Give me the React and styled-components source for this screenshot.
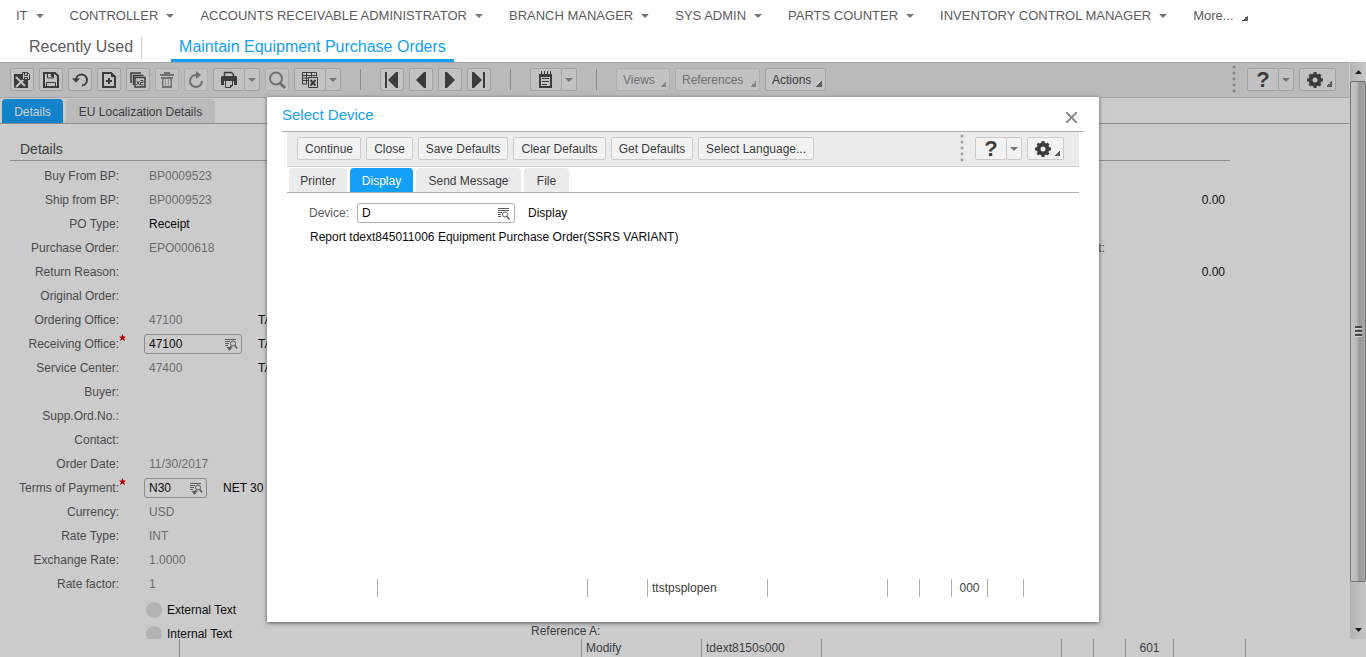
import React from "react";
import styled, { createGlobalStyle, css } from "styled-components";

const Global = createGlobalStyle`
  * { box-sizing: border-box; }
  body { margin: 0; font: 12px/16px "Liberation Sans", Arial, sans-serif; color: #3c3c3c; background: #fff; }
  button, input { font: inherit; color: inherit; margin: 0; padding: 0; }
  svg { display: block; flex: none; }
`;

const Page = styled.div`
  display: flex;
  flex-direction: column;
  height: 100vh;
  overflow: hidden;
`;

/* Role menu */
const Roles = styled.nav`
  display: flex;
  align-items: center;
  flex: none;
  height: 31px;
  margin-bottom: 1px;
  padding: 0 16px;
  gap: 26px;
`;
const Role = styled.button`
  display: flex;
  align-items: center;
  gap: 8px;
  border: 0;
  background: none;
  font-size: 13px;
  line-height: 16px;
  color: #5c5c5c;
  white-space: nowrap;
`;
const Sessions = styled.nav`
  display: flex;
  flex: none;
  height: 30px;
  padding: 0 21px;
`;
const Session = styled.a`
  display: flex;
  align-items: center;
  height: 30px;
  padding: 0 8px;
  font-size: 16px;
  text-decoration: none;
  white-space: nowrap;
  color: ${(p) => (p.$active ? "#14a0f8" : "#5c5c5c")};
  ${(p) => p.$active && css`box-shadow: inset 0 -3px #14a0f8;`}
`;
const SessionRule = styled.span`
  width: 1px;
  height: 22px;
  margin: 5px 29px 0 0;
  background: #ccc;
`;

/* Workspace */
const Workspace = styled.div`
  position: relative;
  display: flex;
  flex-direction: column;
  flex: 1;
  min-height: 0;
  background: #cbcbcb;
`;
const Upper = styled.div`
  display: flex;
  flex: 1;
  min-height: 0;
`;
const Pane = styled.main`
  display: flex;
  flex-direction: column;
  flex: 1;
  min-width: 0;
  overflow: hidden;
`;
const Bar = styled.div`
  display: flex;
  align-items: center;
  flex: none;
  gap: 5px;
  height: ${(p) => (p.$light ? 35 : 36)}px;
  padding: ${(p) => (p.$light ? "0 15px 1px 10px" : "0 13px 1px 10px")};
  background: ${(p) => (p.$light ? "#ebebeb" : "#bababa")};
  border: solid ${(p) => (p.$light ? "#d2d2d2" : "#a4a4a4")};
  border-width: ${(p) => (p.$light ? "0 0 1px" : "1px 0")};
`;
const Spring = styled.span`flex: 1;`;
const Rule = styled.span`
  width: 1px;
  height: 21px;
  margin: 0 14px;
  background: #8c8c8c;
`;
const Dots = styled.span`
  width: 4px;
  height: 29px;
  margin-right: 6px;
  background: radial-gradient(circle at 2px 2px, ${(p) => (p.$light ? "#a6a6a6" : "#868686")} 1px, transparent 2px) 0 0 / 4px 6px;
`;
const Tool = styled.button`
  display: flex;
  align-items: center;
  justify-content: center;
  flex: none;
  height: 23px;
  min-width: ${(p) => p.$w || 24}px;
  padding: 0;
  white-space: nowrap;
  border: 1px solid ${(p) => (p.$light ? "#cacaca" : p.disabled ? "#aeaeae" : "#a2a2a2")};
  border-radius: 2px;
  background: ${(p) => (p.$light ? "#f2f2f2" : "#c2c2c2")};
  color: ${(p) => (p.disabled ? "#717171" : "#3c3c3c")};
`;
const Split = styled.span`
  display: flex;
  ${Tool} + ${Tool} { margin-left: -1px; color: #5c5c5c; }
`;
const MenuTool = styled(Tool)`
  justify-content: space-between;
  padding: 0 3px 0 6px;
`;
const Corner = styled.span`
  align-self: flex-end;
  width: 6px;
  height: 6px;
  margin-bottom: 3px;
  background: linear-gradient(135deg, transparent 50%, #5c5c5c 50%);
  ${(p) => p.$faint && css`opacity: 0.6;`}
`;
const Mark = styled.span`
  font-size: 22px;
  font-weight: bold;
`;
const TabStrip = styled.div`
  display: flex;
  align-items: flex-end;
  flex: none;
  gap: 3px;
  height: 26px;
  padding-left: 2px;
  border-bottom: 1px solid ${(p) => (p.$light ? "#acacac" : "#8c8c8c")};
`;
const Tab = styled.button`
  height: 24px;
  min-width: ${(p) => p.$w}px;
  padding-top: 1px;
  border: 0;
  border-radius: 4px 4px 0 0;
  background: ${(p) => (p.$light ? "#ebebeb" : "#bababa")};
  white-space: nowrap;
  ${(p) => p.$active && css`
    background: ${p.$light ? "#14a0f8" : "#1283ca"};
    color: ${p.$light ? "#fff" : "#d2d2d2"};
  `}
`;
const Heading = styled.h2`
  flex: none;
  height: 37px;
  margin: 0 119px 3px 10px;
  padding: 17px 10px 0;
  font-size: 14px;
  line-height: 16px;
  font-weight: normal;
  border-bottom: 1px solid #8c8c8c;
`;
const Columns = styled.div`
  display: flex;
  flex: 1;
  min-height: 0;
  padding: 0 124px 0 10px;
`;
const Column = styled.div`
  flex: ${(p) => p.$grow || "none"};
  ${(p) => p.$bottom && css`align-self: flex-end;`}
`;
const Row = styled.div`
  display: flex;
  align-items: center;
  height: 24px;
  white-space: nowrap;
`;
const Label = styled.label`
  width: 109px;
  text-align: right;
  color: #4a4a4a;
`;
const Gutter = styled.span`
  width: 25px;
  height: 20px;
`;
const Value = styled.output`
  width: 98px;
  padding-left: 5px;
  color: ${(p) => (p.$strong ? "#0c0c0c" : "#6b6b6b")};
`;
const Note = styled.span`
  padding-left: ${(p) => p.$gap || 16}px;
  color: #0c0c0c;
`;
const Field = styled.span`
  display: flex;
  align-items: center;
  width: ${(p) => p.$w}px;
  height: 20px;
  padding: 0 3px 0 4px;
  border: 1px solid ${(p) => (p.$light ? "#acacac" : "#8c8c8c")};
  border-radius: 3px;
  input { flex: 1; min-width: 0; width: 0; border: 0; outline: 0; background: none; color: #0c0c0c; }
  button { border: 0; background: none; color: #5c5c5c; }
`;
const Texts = styled.div`
  margin: 2px 0 0 136px;
`;
const Option = styled.label`
  display: flex;
  align-items: center;
  gap: 5px;
  height: 24px;
  color: #0c0c0c;
  input { appearance: none; width: 16px; height: 16px; border-radius: 50%; background: #b3b3b3; }
`;
const Amounts = styled.div`
  display: grid;
  grid-auto-rows: 24px;
  grid-template-columns: 1fr 120px;
  align-items: center;
  text-align: right;
`;
const Amount = styled.output`color: #0c0c0c;`;

/* Scroll bar */
const Scroll = styled.div`
  display: flex;
  flex-direction: column;
  align-items: center;
  flex: none;
  width: 16px;
  margin-left: 1px;
  background: linear-gradient(90deg, #b3b3b3, #c6c6c6);
`;
const ScrollEnd = styled.button`
  display: flex;
  align-items: center;
  justify-content: center;
  width: 16px;
  height: 19px;
  border: 0;
  background: none;
  color: #1c1c1c;
`;
const Thumb = styled.div`
  display: flex;
  flex-direction: column;
  align-items: center;
  justify-content: center;
  gap: 1px;
  flex: 500;
  width: 16px;
  border: 1px solid #737373;
  border-radius: 2px;
  background: linear-gradient(90deg, #c6c6c6, #b9b9b9 40%, #98989b 60%, #a6a6a8);
`;
const Grip = styled.i`
  width: 7px;
  height: 3px;
  background: #484848;
  border-bottom: 1px solid #d2d2d2;
`;
const Track = styled.div`flex: 38;`;

/* Status line */
const Status = styled.footer`
  display: flex;
  flex: none;
  height: 18px;
`;
const Cell = styled.span`
  flex: ${(p) => (p.$w ? `none` : 1)};
  width: ${(p) => p.$w || 0}px;
  padding-left: ${(p) => (p.$center ? 0 : 4)}px;
  text-align: ${(p) => (p.$center ? "center" : "left")};
  line-height: 18px;
  border-right: 1px solid ${(p) => (p.$light ? "#acacac" : "#8c8c8c")};
  &:last-child { border: 0; }
`;

/* Dialog */
const Overlay = styled.div`
  position: absolute;
  inset: 0;
  display: flex;
  justify-content: center;
  padding: 35px 0;
`;
const Dialog = styled.section`
  display: flex;
  flex-direction: column;
  width: 832px;
  max-width: 100%;
  padding: 0 15px 25px;
  background: #fff;
  box-shadow: 0 1px 4px #555;
`;
const DialogHead = styled.header`
  display: flex;
  justify-content: space-between;
  flex: none;
  height: 35px;
  padding: 10px 7px 0 0;
  border-bottom: 1px solid #acacac;
  h1 { margin: 0; font-size: 15px; line-height: 16px; font-weight: normal; color: #14a0f8; }
  button { height: 20px; border: 0; background: none; }
`;
const DialogBody = styled.div`
  display: flex;
  flex-direction: column;
  flex: 1;
  margin: 0 5px;
`;
const Device = styled.div`
  flex: 1;
  padding: 8px 0 0 22px;
  color: #0c0c0c;
  ${Label} { width: 48px; text-align: left; color: #5c5c5c; }
`;
const Report = styled.p`
  margin: 4px 1px;
`;

const Caret = () => (
  <svg width="8" height="4" viewBox="0 0 8 4" fill="#757575"><path d="M0 0h8L4 4z" /></svg>
);
const Icon = ({ w = 18, children }) => (
  <svg width={w} height="19" viewBox={`0 0 ${w} 19`} fill="none" stroke="currentColor" strokeWidth="2">{children}</svg>
);
const icons = {
  saveClose: (
    <Icon>
      <path d="M1 4h8v6h6v8H2l-1-1z" fill="currentColor" stroke="none" />
      <path d="M3 7l9 9M11 9l-8 8" stroke="#c2c2c2" />
      <path d="M9.500 2.500h5l2 2v5h-7z" fill="#c2c2c2" strokeWidth="1" />
      <path d="M11.500 3v2.500h3V3M11.500 9.500V7.500h3v2" strokeWidth="1" />
    </Icon>
  ),
  save: (
    <Icon>
      <path d="M2 3h11l3 3v11H2z" />
      <path d="M5.500 3v5h6V3M4.500 17v-4.500h9V17" strokeWidth="1" />
      <path d="M9 4h2v3H9z" fill="currentColor" stroke="none" />
    </Icon>
  ),
  undo: (
    <Icon>
      <path d="M5 9.500a5.500 5.500 0 1 1 6 6" />
      <path d="M1 8.500h8l-4 4z" fill="currentColor" stroke="none" />
    </Icon>
  ),
  add: (
    <Icon>
      <path d="M3 3h8l4 4v10H3z" />
      <path d="M11 2v5h5z" fill="currentColor" stroke="none" />
      <path d="M9 8v6M6 11h6" />
    </Icon>
  ),
  copy: (
    <Icon>
      <path d="M2 13V3h10M4.500 15V5.500h10" strokeWidth="1.500" />
      <path d="M6 7.500h10V17H6z" strokeWidth="1.500" />
      <path d="M7.500 11l3 4M10.500 11l-3 4M11.500 10.500h2.500v2h-2.500v2.500h3" strokeWidth="1" />
    </Icon>
  ),
  trash: (
    <Icon>
      <path d="M2 5h14M6 3h6" />
      <path d="M3 7h12v2h-1v9H4V9H3z" fill="currentColor" stroke="none" />
      <path d="M6.500 9v7M9 9v7M11.500 9v7" stroke="#c2c2c2" />
    </Icon>
  ),
  refresh: (
    <Icon>
      <path d="M9 5a6 6 0 1 0 6 6" />
      <path d="M9 1v8l5-4z" fill="currentColor" stroke="none" />
    </Icon>
  ),
  print: (
    <Icon>
      <path d="M4.500 6V2.500h7l2 2V6" strokeWidth="1.500" />
      <path d="M1 7l1-1h14l1 1v8h-3v-4H4v4H1z" fill="currentColor" stroke="none" />
      <path d="M5.500 11v6.500h5l2-2V11" strokeWidth="1" />
      <path d="M10 18v-3h3z" fill="currentColor" stroke="none" />
    </Icon>
  ),
  search: (
    <Icon>
      <circle cx="8" cy="8.500" r="6" />
      <path d="M12 13l5 5" strokeWidth="3" />
    </Icon>
  ),
  excel: (
    <Icon>
      <path d="M1.500 2.500h14v4M1.500 2v12H6M1.500 5.500h14M1.500 10.500H8M5.500 2v12M10.500 2v5M1.500 8h6" strokeWidth="1" />
      <path d="M7.500 7.500h9v10h-9z" strokeWidth="1" fill="#c2c2c2" />
      <path d="M9.500 10l5 5.500M14.500 10l-5 5.500" />
    </Icon>
  ),
  first: <Icon><path d="M2 2h2v16H2zM5 10l8-8h2v16h-2z" fill="currentColor" stroke="none" /></Icon>,
  prev: <Icon><path d="M4 10l8-8h2v16h-2z" fill="currentColor" stroke="none" /></Icon>,
  next: <Icon><path d="M14 10L6 2H4v16h2z" fill="currentColor" stroke="none" /></Icon>,
  last: <Icon><path d="M15 2h-2v16h2zM12 10L4 2H2v16h2z" fill="currentColor" stroke="none" /></Icon>,
  notes: (
    <Icon>
      <path d="M3 5h11v12H3z" />
      <path d="M4.500 1v3M7.500 1v3M10.500 1v3M13.500 1v3M5 8.500h7M5 11.500h7M5 14.500h5" strokeWidth="1" />
      <path d="M2 4h13v3H2z" fill="currentColor" stroke="none" />
    </Icon>
  ),
  gear: (
    <Icon>
      <circle cx="9" cy="10" r="4.500" strokeWidth="4" />
      <path d="M9 2v3M9 15v3M1 10h3M14 10h3M3.500 4.500l2 2M12.500 13.500l2 2M14.500 4.500l-2 2M5.500 13.500l-2 2" strokeWidth="3" />
    </Icon>
  ),
  lookup: (
    <svg width="14" height="13" viewBox="0 0 14 13" fill="none" stroke="currentColor">
      <path d="M1 1.500h11M1 3.500h11M1 5.500h4M1 7.500h3M1 9.500h3" />
      <circle cx="8" cy="7.500" r="2.500" />
      <path d="M10 9.500l2.500 3" strokeWidth="1.500" />
    </svg>
  ),
  browse: (
    <svg width="14" height="13" viewBox="0 0 14 13" fill="none" stroke="currentColor">
      <path d="M1 1.500h11M1 3.500h5M1 5.500h4M1 7.500h3" />
      <circle cx="9" cy="5.500" r="2.500" />
      <path d="M7 8l-1 2M11 7.500l2 3" strokeWidth="1.500" />
      <path d="M2.500 9h6l-3 4z" fill="currentColor" stroke="none" />
    </svg>
  ),
  close: (
    <svg width="11" height="11" viewBox="0 0 11 11" stroke="#8c8c8c" strokeWidth="2"><path d="M0 0l11 11M11 0L0 11" /></svg>
  ),
  star: (
    <svg width="7" height="7" viewBox="0 0 7 7" fill="#b40000"><path d="M3.500 0l1 2.500H7L5 4.200 6 7 3.500 5.400 1 7l1-2.800L0 2.500h2.500z" /></svg>
  ),
};

const roles = ["IT", "CONTROLLER", "ACCOUNTS RECEIVABLE ADMINISTRATOR", "BRANCH MANAGER", "SYS ADMIN", "PARTS COUNTER", "INVENTORY CONTROL MANAGER"];

const fields = [
  { label: "Buy From BP:", value: "BP0009523" },
  { label: "Ship from BP:", value: "BP0009523" },
  { label: "PO Type:", value: "Receipt", strong: true },
  { label: "Purchase Order:", value: "EPO000618" },
  { label: "Return Reason:" },
  { label: "Original Order:" },
  { label: "Ordering Office:", value: "47100", note: "TA" },
  { label: "Receiving Office:", value: "47100", edit: 98, note: "TA" },
  { label: "Service Center:", value: "47400", note: "TA" },
  { label: "Buyer:" },
  { label: "Supp.Ord.No.:" },
  { label: "Contact:" },
  { label: "Order Date:", value: "11/30/2017" },
  { label: "Terms of Payment:", value: "N30", edit: 63, note: "NET 30" },
  { label: "Currency:", value: "USD" },
  { label: "Rate Type:", value: "INT" },
  { label: "Exchange Rate:", value: "1.0000" },
  { label: "Rate factor:", value: "1" },
];

function SplitTool({ icon, label, light }) {
  return (
    <Split>
      <Tool $light={light} $w={32} aria-label={label}>{icon}</Tool>
      <Tool $light={light} $w={16} aria-label={`${label} menu`}><Caret /></Tool>
    </Split>
  );
}

function HelpTools({ light }) {
  return (
    <>
      <Spring />
      <Dots $light={light} />
      <SplitTool light={light} label="Help" icon={<Mark>?</Mark>} />
      <MenuTool $light={light} $w={37} aria-label="Settings">{icons.gear}<Corner /></MenuTool>
    </>
  );
}

function FormRow({ id, field }) {
  const { label, value, strong, edit, note } = field;
  return (
    <Row>
      <Label htmlFor={id}>{label}</Label>
      <Gutter>{edit && icons.star}</Gutter>
      {edit ? (
        <Field $w={edit}>
          <input id={id} defaultValue={value} />
          <button aria-label="Look up">{icons.browse}</button>
        </Field>
      ) : (
        <Value id={id} $strong={strong}>{value}</Value>
      )}
      {note && <Note>{note}</Note>}
    </Row>
  );
}

function SelectDevice() {
  return (
    <Dialog role="dialog" aria-labelledby="dialog-title">
      <DialogHead>
        <h1 id="dialog-title">Select Device</h1>
        <button aria-label="Close dialog">{icons.close}</button>
      </DialogHead>
      <DialogBody>
        <Bar $light>
          <Tool $light $w={64}>Continue</Tool>
          <Tool $light $w={47}>Close</Tool>
          <Tool $light $w={90}>Save Defaults</Tool>
          <Tool $light $w={93}>Clear Defaults</Tool>
          <Tool $light $w={82}>Get Defaults</Tool>
          <Tool $light $w={116}>Select Language...</Tool>
          <HelpTools light />
        </Bar>
        <TabStrip $light>
          <Tab $light $w={58}>Printer</Tab>
          <Tab $light $w={63} $active>Display</Tab>
          <Tab $light $w={105}>Send Message</Tab>
          <Tab $light $w={45}>File</Tab>
        </TabStrip>
        <Device>
          <Row>
            <Label htmlFor="device">Device:</Label>
            <Field $light $w={158}>
              <input id="device" defaultValue="D" />
              <button aria-label="Look up device">{icons.lookup}</button>
            </Field>
            <Note $gap={13}>Display</Note>
          </Row>
          <Report>Report tdext845011006 Equipment Purchase Order(SSRS VARIANT)</Report>
        </Device>
        <Status>
          <Cell $light $w={91} />
          <Cell $light $w={210} />
          <Cell $light $w={60} />
          <Cell $light $w={120}>ttstpsplopen</Cell>
          <Cell $light $w={120} />
          <Cell $light $w={32} />
          <Cell $light $w={32} />
          <Cell $light $w={36} $center>000</Cell>
          <Cell $light $w={36} />
          <Cell $light />
        </Status>
      </DialogBody>
    </Dialog>
  );
}

export default function App() {
  return (
    <Page>
      <Global />
      <Roles>
        {roles.map((r) => <Role key={r}>{r}<Caret /></Role>)}
        <Role>More...<Corner /></Role>
      </Roles>
      <Sessions>
        <Session href="#recent">Recently Used</Session>
        <SessionRule />
        <Session href="#orders" $active>Maintain Equipment Purchase Orders</Session>
      </Sessions>
      <Workspace>
        <Upper>
          <Pane>
            <Bar>
              <Tool aria-label="Save and close">{icons.saveClose}</Tool>
              <Tool aria-label="Save">{icons.save}</Tool>
              <Tool aria-label="Undo">{icons.undo}</Tool>
              <Tool aria-label="New">{icons.add}</Tool>
              <Tool aria-label="Duplicate">{icons.copy}</Tool>
              <Tool aria-label="Delete" disabled>{icons.trash}</Tool>
              <Tool aria-label="Refresh" disabled>{icons.refresh}</Tool>
              <SplitTool label="Print" icon={icons.print} />
              <Tool aria-label="Find" disabled>{icons.search}</Tool>
              <SplitTool label="Export" icon={icons.excel} />
              <Rule />
              <Tool aria-label="First">{icons.first}</Tool>
              <Tool aria-label="Previous">{icons.prev}</Tool>
              <Tool aria-label="Next">{icons.next}</Tool>
              <Tool aria-label="Last">{icons.last}</Tool>
              <Rule />
              <SplitTool label="Notes" icon={icons.notes} />
              <Rule />
              <MenuTool $w={54} disabled>Views<Corner $faint /></MenuTool>
              <MenuTool $w={85} disabled>References<Corner $faint /></MenuTool>
              <MenuTool $w={61}>Actions<Corner /></MenuTool>
              <HelpTools />
            </Bar>
            <TabStrip>
              <Tab $w={61} $active>Details</Tab>
              <Tab $w={149}>EU Localization Details</Tab>
            </TabStrip>
            <Heading>Details</Heading>
            <Columns>
              <Column $grow="0 0 521px">
                {fields.map((f, i) => <FormRow key={f.label} id={`field-${i}`} field={f} />)}
                <Texts>
                  <Option><input type="radio" disabled />External Text</Option>
                  <Option><input type="radio" disabled />Internal Text</Option>
                </Texts>
              </Column>
              <Column $bottom>Reference A:</Column>
              <Column $grow="1">
                <Amounts>
                  <span /><span />
                  <span /><Amount>0.00</Amount>
                  <span /><span />
                  <span>t:</span><span />
                  <span /><Amount>0.00</Amount>
                </Amounts>
              </Column>
            </Columns>
          </Pane>
          <Scroll>
            <ScrollEnd aria-label="Scroll up"><svg width="7" height="4" viewBox="0 0 7 4" fill="currentColor"><path d="M0 4h7L3.500 0z" /></svg></ScrollEnd>
            <Thumb><Grip /><Grip /><Grip /></Thumb>
            <Track />
            <ScrollEnd aria-label="Scroll down"><svg width="7" height="4" viewBox="0 0 7 4" fill="currentColor"><path d="M0 0h7L3.500 4z" /></svg></ScrollEnd>
          </Scroll>
        </Upper>
        <Status>
          <Cell $w={180} />
          <Cell />
          <Cell $w={120}>Modify</Cell>
          <Cell $w={120}>tdext8150s000</Cell>
          <Cell $w={240} />
          <Cell $w={32} />
          <Cell $w={32} />
          <Cell $w={48} $center>601</Cell>
          <Cell $w={72} />
          <Cell $w={120} />
        </Status>
        <Overlay><SelectDevice /></Overlay>
      </Workspace>
    </Page>
  );
}
